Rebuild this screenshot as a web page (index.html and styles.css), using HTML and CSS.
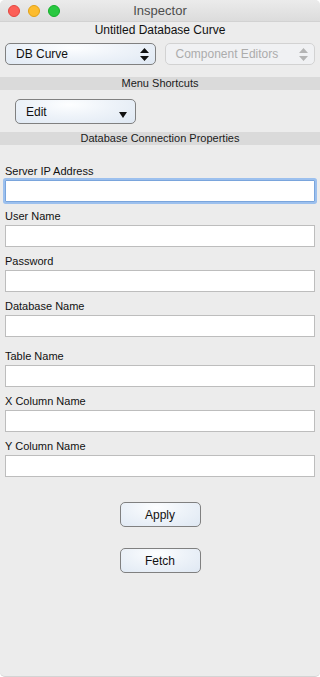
FILE: index.html
```html
<!DOCTYPE html>
<html lang="en">
<head>
  <meta charset="UTF-8">
  <meta name="viewport" content="width=device-width, initial-scale=1.0">
  <title>Inspector</title>
  <link rel="stylesheet" href="styles.css">
</head>
<body>
  <div class="window">
    <div class="titlebar">
      <div class="lights">
        <span class="light red"></span>
        <span class="light yellow"></span>
        <span class="light green"></span>
      </div>
      <div class="title">Inspector</div>
      <div></div>
    </div>

    <div class="doc-title">Untitled Database Curve</div>

    <div class="popup-row">
      <div class="popup">
        <span>DB Curve</span>
        <svg class="updown" width="9" height="13" viewBox="0 0 9 13"><path d="M4.5 0 L9 5 L0 5 Z M0 8 L9 8 L4.5 13 Z" fill="#111"/></svg>
      </div>
      <div class="popup disabled">
        <span>Component Editors</span>
        <svg class="updown" width="9" height="13" viewBox="0 0 9 13"><path d="M4.5 0 L9 5 L0 5 Z M0 8 L9 8 L4.5 13 Z" fill="#b4b4b4"/></svg>
      </div>
    </div>

    <div class="section-head">Menu Shortcuts</div>

    <div class="shortcut-row">
      <div class="popup pulldown">
        <span>Edit</span>
        <svg class="down" width="8" height="6" viewBox="0 0 8 6"><path d="M0 0 L8 0 L4 6 Z" fill="#111"/></svg>
      </div>
    </div>

    <div class="section-head">Database Connection Properties</div>

    <form class="props">
      <label class="field">
        <span>Server IP Address</span>
        <input type="text" class="focused">
      </label>
      <label class="field">
        <span>User Name</span>
        <input type="text">
      </label>
      <label class="field">
        <span>Password</span>
        <input type="text">
      </label>
      <label class="field">
        <span>Database Name</span>
        <input type="text">
      </label>
      <label class="field spaced">
        <span>Table Name</span>
        <input type="text">
      </label>
      <label class="field">
        <span>X Column Name</span>
        <input type="text">
      </label>
      <label class="field">
        <span>Y Column Name</span>
        <input type="text">
      </label>

      <div class="actions">
        <button type="button">Apply</button>
        <button type="button">Fetch</button>
      </div>
    </form>
  </div>
</body>
</html>
```

FILE: styles.css
```css
html {
  background: #ffffff;
}
body {
  margin: 0;
  padding: 0;
  font-family: "Liberation Sans", Arial, sans-serif;
  color: #1a1a1a;
}
.window {
  width: 320px;
  height: 677px;
  box-sizing: border-box;
  background: #ececec;
  border-radius: 5px;
  border-bottom: 1px solid #d4d4d4;
  overflow: hidden;
}
.titlebar {
  height: 21px;
  border-bottom: 1px solid #d2d2d2;
  background: linear-gradient(to bottom, #ebebeb, #dcdcdc);
  display: grid;
  grid-template-columns: 1fr auto 1fr;
  align-items: center;
}
.lights {
  display: flex;
  gap: 8px;
  padding-left: 8px;
  padding-top: 1px;
}
.light {
  width: 12px;
  height: 12px;
  border-radius: 50%;
  box-sizing: border-box;
}
.light.red {
  background: #fc5f57;
  border: 1px solid #e2463f;
}
.light.yellow {
  background: #fdbc2e;
  border: 1px solid #e1a116;
}
.light.green {
  background: #28c840;
  border: 1px solid #14ae2a;
}
.title {
  font-size: 13px;
  color: #4d4d4d;
}
.doc-title {
  text-align: center;
  font-size: 12px;
  line-height: 14px;
  margin-top: 1px;
  color: #111;
}
.popup-row {
  display: flex;
  gap: 9px;
  padding: 0 5px;
  margin-top: 6px;
}
.popup {
  flex: 1;
  height: 22px;
  box-sizing: border-box;
  border: 1px solid #808080;
  border-radius: 5px;
  background: radial-gradient(ellipse at 45% 20%, #fdfeff 0%, #eef3f9 45%, #dfe8f3 100%);
  display: flex;
  align-items: center;
  justify-content: space-between;
  padding: 0 6px 0 10px;
  font-size: 12px;
  color: #111;
}
.popup.disabled {
  border-color: #d2d2d2;
  background: #f0f1f3;
  color: #acacac;
}
.section-head {
  background: #dadada;
  text-align: center;
  font-size: 11px;
  line-height: 13px;
  color: #1a1a1a;
}
.popup-row + .section-head {
  margin-top: 12px;
}
.shortcut-row {
  padding: 9px 15px 8px;
}
.popup.pulldown {
  width: 121px;
  flex: none;
  height: 25px;
  padding: 0 8px 0 10px;
}
.pulldown .down {
  margin-top: 6px;
}
.props {
  display: flex;
  flex-direction: column;
  padding: 19px 5px 0;
}
.field {
  display: flex;
  flex-direction: column;
  gap: 2px;
  margin-bottom: 7px;
  font-size: 11px;
  line-height: 14px;
  color: #111;
}
.field.spaced {
  margin-top: 5px;
}
.field input {
  height: 22px;
  box-sizing: border-box;
  border: 1px solid #bdbdbd;
  background: #fff;
  margin: 0;
  padding: 0 3px;
  font-family: inherit;
}
.field input.focused {
  border: 1px solid #7aa5dc;
  box-shadow: 0 0 0 2px #9cc0ee;
  border-radius: 1px;
  outline: none;
}
.actions {
  display: flex;
  flex-direction: column;
  align-items: center;
  gap: 21px;
  margin-top: 18px;
}
.actions button {
  width: 81px;
  height: 25px;
  border: 1px solid #808080;
  border-radius: 5px;
  background: radial-gradient(ellipse at 45% 20%, #fdfeff 0%, #eef3f9 45%, #dfe8f3 100%);
  font-family: inherit;
  font-size: 12px;
  color: #111;
  padding: 0;
}
```
